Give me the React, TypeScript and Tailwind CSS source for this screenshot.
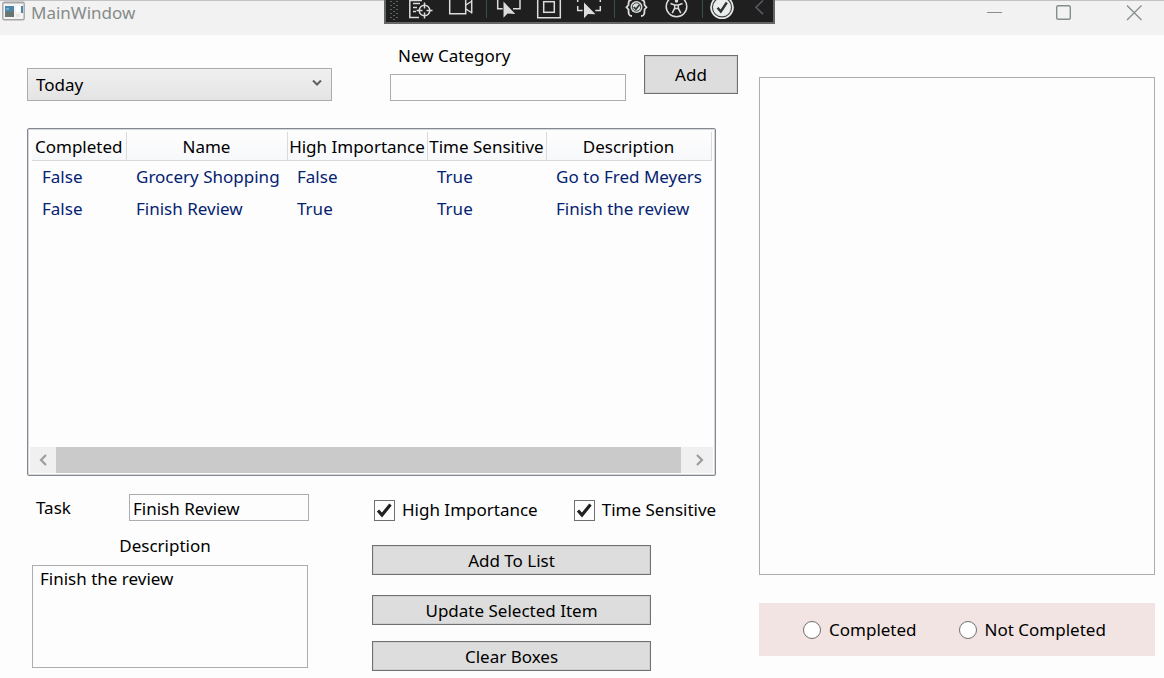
import React, { useState } from "react";

const field =
  "border border-[#abadb3] bg-[#fdfdfd] text-black outline-none focus:border-[#569de5]";
const pushButton =
  "flex items-center justify-center border border-[#707070] bg-[#dcdddc] pt-px text-black shadow-[inset_0_0_0_1px_#cfd0cf] hover:bg-[#cfe4f2]";

const columns = [
  { title: "Completed", width: "w-[94px]" },
  { title: "Name", width: "w-[161px]" },
  { title: "High Importance", width: "w-[140px]" },
  { title: "Time Sensitive", width: "w-[119px]" },
  { title: "Description", width: "w-[165px]" },
];

const tasks = [
  ["False", "Grocery Shopping", "False", "True", "Go to Fred Meyers"],
  ["False", "Finish Review", "True", "True", "Finish the review"],
];

function ToolButton({
  label,
  width = "w-10",
  size = 40,
  children,
}: {
  label: string;
  width?: string;
  size?: number;
  children: React.ReactNode;
}) {
  return (
    <button type="button" aria-label={label} className={`h-[22px] shrink-0 ${width}`}>
      <svg
        width={size}
        height={22}
        viewBox={`0 0 ${size} 22`}
        fill="none"
        stroke="#dcdcdc"
        strokeWidth={1.5}
        className="block"
      >
        {children}
      </svg>
    </button>
  );
}

function Separator() {
  return (
    <div className="flex h-[18px] w-2 justify-center">
      <div className="w-px bg-[#38504a]" />
    </div>
  );
}

function DebugToolbar() {
  return (
    <div className="absolute top-0 left-[384px] flex h-6 border-x-2 border-b-2 border-[#666] bg-[#1f1f1f]">
      <svg width={16} height={22} viewBox="0 0 16 22" fill="#5c6664">
        {[0, 4, 8, 12, 16].map((y) => (
          <g key={y}>
            <rect x={4} y={y + 1} width={2} height={1} />
            <rect x={10} y={y + 1} width={2} height={1} />
            <rect x={7} y={y + 3} width={2} height={1} />
          </g>
        ))}
      </svg>
      <ToolButton label="Go to live visual tree">
        <path d="M17 17.5H7.8V0M7.8 .6H20M11 3.5h7M11 7.5h4M11 11.5h3" />
        <circle cx="22.5" cy="10.5" r="5.3" />
        <path d="M22.5 2.5v6M22.5 12.5v6M14.5 10.5h6M24.5 10.5h6" />
      </ToolButton>
      <ToolButton label="Record">
        <path d="M7.7 0v13.7h16V0M24 5l6-4M24 9l6 4M29.7 0v13.5" />
      </ToolButton>
      <Separator />
      <ToolButton label="Select element">
        <path d="M7.7 0v8.8h5M30 0v8.8h-7" />
        <path d="M13.5 1.500v16.300l4-4.300 7.800.5z" fill="#dcdcdc" stroke="none" />
      </ToolButton>
      <ToolButton label="Display layout adorners">
        <path d="M7.7 0v17.8h22.600V0" />
        <rect x="13.7" y="1.7" width="10.6" height="10.6" />
      </ToolButton>
      <ToolButton label="Track focused element">
        <path d="M7.7 0v2M7.7 6v4.500h5M18 10.800h2M30.300 0v2M30.300 6v4.500h-5" />
        <path d="M14 2.500v15.800l4-4.300 7.500.3z" fill="#dcdcdc" stroke="none" />
      </ToolButton>
      <Separator />
      <ToolButton label="Binding failures">
        <path
          d="M13.500 0C10.500 0 10.500 2 10.500 5L8.500 7.300l2 2.200c0 4 0 6.500 3.500 6.500M23.500 0c3 0 3 2 3 5l2 2.300-2 2.200c0 4 0 6.500-3.500 6.500"
          strokeWidth={1.8}
        />
        <circle cx="18.500" cy="7" r="6" fill="#dcdcdc" stroke="none" />
        <circle cx="18.500" cy="7" r="4.200" stroke="#3a4643" strokeWidth={1} />
        <path d="m15.800 7 2.100 2.200 3.600-4.400" stroke="#29352f" strokeWidth={1.700} />
      </ToolButton>
      <ToolButton label="Scan for accessibility issues">
        <circle cx="18.500" cy="6.500" r="10.300" />
        <circle cx="18.500" cy="1" r="1.700" fill="#dcdcdc" stroke="none" />
        <path d="M12.500 3.500 16.700 5v3.200l-2.500 5M24.500 3.500 20.300 5v3.200l2.500 5M16.700 5h3.600M16.700 8.500h3.600" />
      </ToolButton>
      <Separator />
      <ToolButton label="Hot reload" width="w-8" size={32}>
        <circle cx="16" cy="7.300" r="11.800" fill="#ececec" stroke="none" />
        <circle cx="16" cy="7.300" r="9.600" stroke="#3a4643" strokeWidth={1.2} />
        <path d="m11.500 7.800 3.300 3.700 6-9" stroke="#29352f" strokeWidth={2.4} />
      </ToolButton>
      <ToolButton label="Collapse toolbar" width="w-[35px]" size={35}>
        <path d="m25 .5-7 6.800 7 6.800" stroke="#5d5d68" />
      </ToolButton>
    </div>
  );
}

function TitleBar() {
  return (
    <header className="relative flex h-[35px] items-start justify-between bg-[#f2f2f2] pt-px shadow-[inset_0_1px_0_#c2c2c2]">
      <div className="flex items-center gap-1.5 pl-0.5">
        <svg width={23} height={20} viewBox="0 0 23 20" className="mb-1">
          <rect x=".8" y="1.2" width="21.4" height="17.6" rx="1.5" fill="#f4f4f4" stroke="#a5a5a5" strokeWidth="1.4" />
          <path d="M2 2.500h19" stroke="#d0d0d0" />
          <rect x="3" y="5" width="9" height="11" fill="#4c86ad" />
          <path d="M3 16v-4l3-2 3 1 3-2v7z" fill="#6b7570" />
          <path d="M4 7h3v2H4z" fill="#79add0" />
          <rect x="14" y="5" width="4" height="6" fill="#fff" />
          <rect x="14" y="13" width="4" height="3" fill="#e6e6e6" />
          <path d="M19 5h2v7h-2z" fill="#4c86ad" />
        </svg>
        <h1 className="text-[17px] leading-6 text-[#858b89]">MainWindow</h1>
      </div>
      <DebugToolbar />
      <div className="flex pr-[17px] text-[#858e8b]">
        <button type="button" aria-label="Minimize" className="w-[70px]">
          <svg width={70} height={24} fill="none" stroke="currentColor">
            <path d="M40 11.500h15" />
          </svg>
        </button>
        <button type="button" aria-label="Maximize" className="w-[70px]">
          <svg width={70} height={24} fill="none" stroke="currentColor" strokeWidth={1.4}>
            <rect x="39.7" y="4.700" width="13.600" height="13.600" rx="1.5" />
          </svg>
        </button>
        <button type="button" aria-label="Close" className="w-[60px]">
          <svg width={60} height={24} fill="none" stroke="currentColor" strokeWidth={1.3}>
            <path d="m40 4.500 14.500 14.500M54.500 4.500 40 19" />
          </svg>
        </button>
      </div>
    </header>
  );
}

function CheckBox({ label }: { label: string }) {
  const [checked, setChecked] = useState(true);
  return (
    <label className="flex items-center gap-[7px] whitespace-nowrap">
      <span className="relative block size-[21px]">
        <input
          type="checkbox"
          checked={checked}
          onChange={(e) => setChecked(e.target.checked)}
          className="block size-[21px] appearance-none border border-[#707070] bg-white"
        />
        {checked && (
          <svg viewBox="0 0 21 21" className="pointer-events-none absolute inset-0 size-[21px]">
            <path d="M4 10.500 8 15 16.500 4.500" fill="none" stroke="#212121" strokeWidth="3.200" />
          </svg>
        )}
      </span>
      {label}
    </label>
  );
}

function Radio({ label }: { label: string }) {
  return (
    <label className="flex items-center gap-2 whitespace-nowrap">
      <input
        type="radio"
        name="status"
        className="size-[18px] appearance-none rounded-full border border-[#707070] bg-white checked:border-[5px]"
      />
      {label}
    </label>
  );
}

function TaskTable() {
  return (
    <section className="mt-[27px] mr-[22px] flex h-[348px] flex-col rounded-[2px] border border-[#828790] px-0.5 pt-[3px] pb-0.5 shadow-[inset_0_0_0_1px_#d5d7da]">
      <div className="grow pr-1 pl-0.5">
        <table className="w-full table-fixed border-collapse">
          <thead>
            <tr className="h-7">
              {columns.map((c) => (
                <th
                  key={c.title}
                  className={`${c.width} border-r border-b border-[#d9dadc] bg-linear-to-b from-[#fdfdfd] to-[#f7f8fa] p-0 pt-0.5 text-center font-normal whitespace-nowrap`}
                >
                  {c.title}
                </th>
              ))}
            </tr>
          </thead>
          <tbody className="text-[#042271]">
            {tasks.map((row) => (
              <tr key={row[1]} className="h-8">
                {row.map((cell, i) => (
                  <td key={i} className="p-0 pt-0.5 pl-[10px] whitespace-nowrap">
                    {cell}
                  </td>
                ))}
              </tr>
            ))}
          </tbody>
        </table>
      </div>
      <div className="flex h-[26px] bg-[#f0f0f0] text-[#9b9e9d]">
        <button type="button" aria-label="Scroll left" className="flex w-[26px] items-center justify-center">
          <svg width={10} height={12} fill="none" stroke="currentColor" strokeWidth={2.2}>
            <path d="M8 1 3 6l5 5" />
          </svg>
        </button>
        <div className="grow bg-[#cacaca]" />
        <button type="button" aria-label="Scroll right" className="ml-[6px] flex w-[26px] items-center justify-center">
          <svg width={10} height={12} fill="none" stroke="currentColor" strokeWidth={2.2}>
            <path d="m2 1 5 5-5 5" />
          </svg>
        </button>
      </div>
    </section>
  );
}

export default function App() {
  return (
    <div className="min-h-screen bg-[#fdfdfd] font-['Noto_Sans','Open_Sans',sans-serif] text-[17px] leading-6 text-black">
      <TitleBar />
      <main className="grid grid-cols-[711fr_396fr] gap-[21px] pr-[9px] pl-[27px]">
        <div className="min-w-0">
          <div className="flex items-end pt-[9px]">
            <div className="relative w-[305px] shrink-0">
              <select
                aria-label="Category"
                className="block h-[33px] w-full appearance-none border border-[#acacac] bg-linear-to-b from-[#f0f0f0] to-[#e4e4e4] pt-px pl-2"
              >
                <option>Today</option>
              </select>
              <svg
                width={12}
                height={8}
                fill="none"
                stroke="#606060"
                strokeWidth={2}
                className="pointer-events-none absolute top-[11px] right-[9px]"
              >
                <path d="m2 1.500 4 4 4-4" />
              </svg>
            </div>
            <div className="ml-[58px] flex min-w-0 grow flex-col gap-[6px]">
              <label htmlFor="new-category" className="pl-2">
                New Category
              </label>
              <input id="new-category" className={`h-[27px] w-full px-1 ${field}`} />
            </div>
            <button type="button" className={`mb-[7px] ml-[18px] h-[39px] w-[94px] shrink-0 ${pushButton}`}>
              Add
            </button>
          </div>

          <TaskTable />

          <div className="mt-[18px] flex gap-[63px]">
            <div className="flex w-[282px] flex-col">
              <div className="flex items-center justify-between pl-[9px]">
                <label htmlFor="task">Task</label>
                <input id="task" defaultValue="Finish Review" className={`h-[27px] w-[180px] px-[3px] pt-px ${field}`} />
              </div>
              <label htmlFor="description" className="mt-[13px] pr-[6px] text-center">
                Description
              </label>
              <textarea
                id="description"
                defaultValue="Finish the review"
                className={`mt-[7px] ml-[5px] block h-[103px] w-[276px] resize-none px-[7px] pt-px pb-0 ${field}`}
              />
            </div>
            <div className="flex grow flex-col pt-[3px]">
              <div className="flex h-[26px] gap-9 pl-0.5">
                <CheckBox label="High Importance" />
                <CheckBox label="Time Sensitive" />
              </div>
              <button type="button" className={`mt-[22px] h-[30px] w-[279px] ${pushButton}`}>
                Add To List
              </button>
              <button type="button" className={`mt-5 h-[30px] w-[279px] ${pushButton}`}>
                Update Selected Item
              </button>
              <button type="button" className={`mt-4 h-[30px] w-[279px] ${pushButton}`}>
                Clear Boxes
              </button>
            </div>
          </div>
        </div>

        <aside className="flex flex-col pt-[42px]">
          <div className="h-[498px] border border-[#abadb3]" />
          <div className="mt-7 flex h-[53px] items-center gap-[42px] bg-[#f2e4e2] pl-11">
            <Radio label="Completed" />
            <Radio label="Not Completed" />
          </div>
        </aside>
      </main>
    </div>
  );
}
